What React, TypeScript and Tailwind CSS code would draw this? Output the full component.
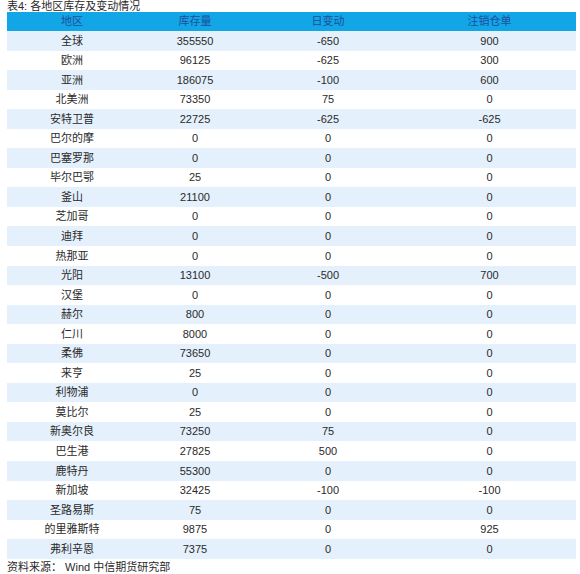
const rows: [string, string, string, string][] = [
  ['全球', '355550', '-650', '900'],
  ['欧洲', '96125', '-625', '300'],
  ['亚洲', '186075', '-100', '600'],
  ['北美洲', '73350', '75', '0'],
  ['安特卫普', '22725', '-625', '-625'],
  ['巴尔的摩', '0', '0', '0'],
  ['巴塞罗那', '0', '0', '0'],
  ['毕尔巴鄂', '25', '0', '0'],
  ['釜山', '21100', '0', '0'],
  ['芝加哥', '0', '0', '0'],
  ['迪拜', '0', '0', '0'],
  ['热那亚', '0', '0', '0'],
  ['光阳', '13100', '-500', '700'],
  ['汉堡', '0', '0', '0'],
  ['赫尔', '800', '0', '0'],
  ['仁川', '8000', '0', '0'],
  ['柔佛', '73650', '0', '0'],
  ['来亨', '25', '0', '0'],
  ['利物浦', '0', '0', '0'],
  ['莫比尔', '25', '0', '0'],
  ['新奥尔良', '73250', '75', '0'],
  ['巴生港', '27825', '500', '0'],
  ['鹿特丹', '55300', '0', '0'],
  ['新加坡', '32425', '-100', '-100'],
  ['圣路易斯', '75', '0', '0'],
  ['的里雅斯特', '9875', '0', '925'],
  ['弗利辛恩', '7375', '0', '0'],
];

const cols = ['w-[130px]', 'w-[116px]', 'w-[150px]', 'flex-1'];

export default function App() {
  return (
    <div className="w-[580px] h-[574px] bg-white text-[#2a2a2a] font-['Liberation_Sans','Noto_Sans_CJK_SC',sans-serif] text-[11px]">
      <div className="pl-[7px] h-[12px] leading-[12px] text-[11px]">表4: 各地区库存及变动情况</div>
      <div className="ml-[7px] w-[569px]">
        <div className="flex h-[19px] items-center bg-[#12a6e6] text-[#1d4f9a]">
          {['地区', '库存量', '日变动', '注销仓单'].map((h, i) => (
            <div key={h} className={`${cols[i]} text-center`}>{h}</div>
          ))}
        </div>
        {rows.map((r, ri) => (
          <div
            key={r[0]}
            className={`flex h-[19.56px] items-center ${ri % 2 === 0 ? 'bg-[#e4f0fb]' : 'bg-white'}`}
          >
            {r.map((c, i) => (
              <div key={i} className={`${cols[i]} text-center`}>{c}</div>
            ))}
          </div>
        ))}
      </div>
      <div className="pl-[7px] mt-[1px] leading-[14px] text-[11px]">资料来源： Wind 中信期货研究部</div>
    </div>
  );
}
